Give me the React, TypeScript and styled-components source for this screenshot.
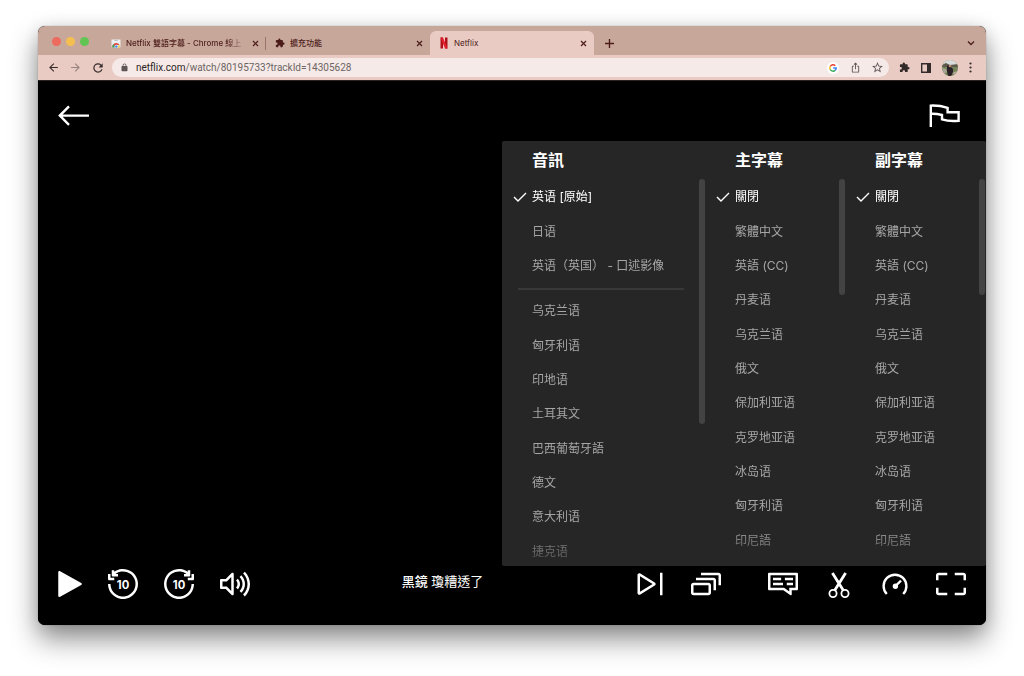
import React from 'react';
import styled, { createGlobalStyle, css } from 'styled-components';

const Global = createGlobalStyle`
  * { box-sizing: border-box; }
  body { margin: 0; background: #fff; font-family: Inter, 'Noto Sans CJK TC', sans-serif; }
  button { font: inherit; color: inherit; background: none; border: 0; padding: 0; cursor: pointer; }
  ul { list-style: none; margin: 0; padding: 0; }
  svg { display: block; }
`;

const Desktop = styled.div`
  padding: 26px 38px 51px;
  overflow: hidden;
`;
const BrowserWindow = styled.div`
  display: flex;
  flex-direction: column;
  border-radius: 7px;
  overflow: hidden;
  background: #000;
  box-shadow: 0 0 1px rgba(0, 0, 0, 0.5), 0 14px 28px rgba(0, 0, 0, 0.45), 0 2px 16px rgba(0, 0, 0, 0.1);
`;

const TabStrip = styled.div`
  display: flex;
  align-items: flex-end;
  height: 29px;
  background: #c8a79b;
  color: #4c1c1a;
`;
const Lights = styled.div`
  display: flex;
  gap: 5px;
  width: 64px;
  padding: 0 0 9px 14px;
`;
const Light = styled.button<{ $color: string }>`
  width: 9px;
  height: 9px;
  border-radius: 50%;
  background: ${p => p.$color};
`;
const Tab = styled.div<{ $active?: boolean; $divider?: boolean }>`
  display: flex;
  align-items: center;
  gap: 5px;
  width: 164px;
  height: 24px;
  padding: 0 5px 0 9px;
  font-size: 8px;
  font-weight: 500;
  line-height: 12px;
  ${p => p.$active && css`
    background: #eacbc3;
    border-radius: 6px 6px 0 0;
    font-weight: 400;
  `}
  ${p => p.$divider && css`
    background: linear-gradient(#9a7469, #9a7469) right center / 1px 13px no-repeat;
  `}
`;
const TabTitle = styled.span<{ $fade?: boolean }>`
  flex: 1;
  min-width: 0;
  white-space: nowrap;
  ${p => p.$fade && css`
    mask-image: linear-gradient(to right, #000 calc(100% - 18px), rgba(0, 0, 0, 0.1));
  `}
`;
const StripButton = styled.button`
  display: grid;
  place-items: center;
  width: 30px;
  height: 24px;
`;
const StripSpacer = styled.div`
  flex: 1;
`;

const Toolbar = styled.div`
  display: flex;
  align-items: center;
  gap: 10px;
  height: 25px;
  padding: 0 10px 0 9px;
  background: #eacbc3;
  color: #332b2a;
`;
const ToolButton = styled.button<{ $faded?: boolean }>`
  display: grid;
  place-items: center;
  flex: none;
  width: 12px;
  height: 16px;
  opacity: ${p => (p.$faded ? 0.45 : 1)};
`;
const AddressBar = styled.div`
  display: flex;
  align-items: center;
  gap: 10px;
  flex: 1;
  min-width: 0;
  height: 19px;
  margin: 0 -1px;
  padding: 0 6px 0 8px;
  border-radius: 10px;
  background: #f6eae8;
  color: #5d5654;
`;
const Url = styled.a`
  flex: 1;
  min-width: 0;
  margin-left: -3px;
  overflow: hidden;
  white-space: nowrap;
  font-family: Roboto, sans-serif;
  font-size: 10px;
  line-height: 14px;
  color: #6c6563;
  text-decoration: none;
`;
const Host = styled.span`
  color: #2a2423;
`;

const Player = styled.main`
  display: flex;
  flex-direction: column;
  border-top: 1px solid #2b2321;
  background: #000;
  color: #fff;
`;
const PlayerTop = styled.div`
  display: flex;
  justify-content: space-between;
  padding: 19px 26px 9px 20px;
`;
const IconButton = styled.button`
  display: grid;
  place-items: center;
  flex: none;
  width: 32px;
  height: 32px;
`;
const Panel = styled.section`
  display: flex;
  align-self: flex-end;
  width: 484px;
  max-width: 100%;
  height: 425px;
  border-radius: 2px;
  overflow: hidden;
  background: #262626;
`;
const Column = styled.fieldset<{ $wide?: boolean }>`
  flex: 0 1 ${p => (p.$wide ? '203px' : '140px')};
  min-width: 0;
  margin: 0;
  padding: 0;
  border: 0;
`;
const Heading = styled.legend`
  height: 38px;
  padding: 0 0 0 30px;
  font-size: 16px;
  font-weight: 600;
  line-height: 38px;
`;
const Scroller = styled.div`
  display: flex;
  align-items: flex-start;
  height: 387px;
  overflow: hidden;
`;
const Options = styled.ul<{ $divided?: boolean }>`
  flex: 1;
  display: grid;
  grid-template-rows: ${p => (p.$divided ? 'repeat(3, 1fr) 11px repeat(8, 1fr)' : 'repeat(11, 1fr)')};
  height: ${p => (p.$divided ? '389px' : '378px')};
  margin-top: 1px;
  mask-image: linear-gradient(to bottom, #000 345px, rgba(0, 0, 0, 0.25) 385px);
`;
const Thumb = styled.div<{ $length: number }>`
  flex: none;
  width: 6px;
  height: ${p => p.$length}px;
  border-radius: 3px;
  background: #434343;
`;
const Option = styled.label`
  display: flex;
  align-items: center;
  height: 100%;
  padding-left: 11px;
  font-size: 12px;
  line-height: 18px;
  white-space: nowrap;
  color: #a6a6a6;
  cursor: pointer;
  &:has(input:checked) { color: #fff; }
`;
const Radio = styled.input`
  appearance: none;
  width: 0;
  height: 0;
  margin: 0;
  & + svg { visibility: hidden; margin-right: 5px; }
  &:checked + svg { visibility: visible; }
`;
const Divider = styled.li`
  align-self: center;
  height: 2px;
  margin: 0 15px 0 16px;
  background: #383838;
`;

const Controls = styled.div`
  display: flex;
  align-items: center;
  height: 59px;
  padding: 0 19px 24px 13px;
`;
const ControlGroup = styled.div`
  display: flex;
  gap: 24px;
`;
const RightControls = styled(ControlGroup)`
  gap: 45px;
`;
const Title = styled.p`
  flex: 1;
  margin: 0;
  padding-bottom: 6px;
  text-align: center;
  font-size: 13px;
  line-height: 20px;
`;
const Show = styled.span`
  font-weight: 500;
`;

const Glyph = ({ d, size = 30 }: { d: string; size?: number }) => (
  <svg width={size} height={size} viewBox="0 0 24 24" fill="currentColor">
    <path fillRule="evenodd" d={d} />
  </svg>
);

const SKIP =
  'M11.02 2.048C13.322 1.821 15.632 2.4 17.556 3.685C19.479 4.971 20.898 6.883 21.569 9.097C22.241 11.311 22.124 13.689 21.239 15.827C20.353 17.964 18.754 19.729 16.714 20.819C14.674 21.91 12.318 22.259 10.049 21.808C7.78 21.357 5.738 20.132 4.27 18.344C2.802 16.556 2 14.314 2 12H0C0 14.776 0.963 17.467 2.724 19.613C4.485 21.759 6.936 23.228 9.659 23.769C12.382 24.311 15.208 23.892 17.657 22.583C20.105 21.274 22.024 19.157 23.087 16.592C24.149 14.027 24.289 11.173 23.483 8.517C22.677 5.86 20.975 3.565 18.667 2.022C16.359 0.48 13.587 -0.214 10.824 0.058C8.712 0.266 6.705 1.029 5 2.253V1H3V5C3 5.552 3.448 6 4 6H8V4H6C7.456 2.908 9.191 2.228 11.02 2.048ZM2 4V7H5V9H1C0.448 9 0 8.552 0 8V4H2Z';

const SkipIcon = ({ forward }: { forward?: boolean }) => (
  <svg width="30" height="30" viewBox="0 0 24 24" fill="currentColor">
    <path d={SKIP} transform={forward ? 'matrix(-1 0 0 1 24 0)' : undefined} />
    <text x="12" y="15.6" textAnchor="middle" fontSize="9" fontWeight="700" fontFamily="Inter, sans-serif">10</text>
  </svg>
);

const GLYPHS = {
  play: 'M5 2.691C5 1.931 5.815 1.449 6.482 1.815L23.407 11.124C24.098 11.504 24.098 12.496 23.407 12.876L6.482 22.185C5.815 22.551 5 22.069 5 21.309V2.691Z',
  volume:
    'M24 12C24 8.287 22.525 4.726 19.9 2.1L18.485 3.515C20.736 5.765 22 8.817 22 12C22 15.183 20.736 18.235 18.485 20.485L19.9 21.9C22.525 19.274 24 15.713 24 12ZM11 4C11 3.596 10.756 3.231 10.383 3.076C10.009 2.921 9.579 3.007 9.293 3.293L4.586 8H1C0.448 8 0 8.448 0 9V15C0 15.552 0.448 16 1 16H4.586L9.293 20.707C9.579 20.993 10.009 21.079 10.383 20.924C10.756 20.769 11 20.405 11 20V4ZM5.707 9.707L9 6.414V17.586L5.707 14.293L5.414 14H2V10H5.414L5.707 9.707ZM16 12C16 10.409 15.368 8.883 14.243 7.757L12.829 9.172C13.579 9.922 14 10.939 14 12C14 13.061 13.579 14.078 12.829 14.828L14.243 16.243C15.368 15.117 16 13.591 16 12ZM17.071 4.929C18.946 6.804 20 9.348 20 12C20 14.652 18.946 17.196 17.071 19.071L15.657 17.657C17.157 16.157 18 14.122 18 12C18 9.878 17.157 7.844 15.657 6.343L17.071 4.929Z',
  next: 'M22 3H20V21H22V3ZM4.286 3.617C3.287 3.002 2 3.721 2 4.895V19.105C2 20.279 3.287 20.998 4.286 20.383L15.832 13.278C16.784 12.692 16.784 11.308 15.832 10.723L4.286 3.617ZM4 18.21V5.79L14.092 12L4 18.21Z',
  episodes:
    'M8 5H22V13H24V5C24 3.895 23.105 3 22 3H8V5ZM18 9H4V7H18C19.105 7 20 7.895 20 9V17H18V9ZM0 13C0 11.895 0.895 11 2 11H14C15.105 11 16 11.895 16 13V19C16 20.105 15.105 21 14 21H2C0.895 21 0 20.105 0 19V13ZM14 19V13H2V19H14Z',
  subtitles:
    'M1 3C0.448 3 0 3.448 0 4V16C0 16.552 0.448 17 1 17H12.3L18 20.9C18.4 21.1 19 20.8 19 20.2V17H23C23.552 17 24 16.552 24 16V4C24 3.448 23.552 3 23 3H1ZM17 18V15H22V5H2V15H12.9L17 18ZM4 7H10.5V9H4ZM13.5 7H20V9H13.5ZM4 11H12V13H4ZM15 11H20V13H15Z',
  fullscreen:
    'M0 5C0 3.895 0.895 3 2 3H9V5H2V9H0V5ZM22 5H15V3H22C23.105 3 24 3.895 24 5V9H22V5ZM2 15V19H9V21H2C0.895 21 0 20.105 0 19V15H2ZM22 19V15H24V19C24 20.105 23.105 21 22 21H15V19H22Z',
  puzzle:
    'M20.5 11H19V7c0-1.1-.9-2-2-2h-4V3.5a2.5 2.5 0 0 0-5 0V5H4c-1.1 0-2 .9-2 2v3.8h1.5c1.5 0 2.7 1.2 2.7 2.7S5 16.2 3.5 16.2H2V20c0 1.1.9 2 2 2h3.800v-1.5c0-1.5 1.2-2.7 2.7-2.7s2.7 1.2 2.7 2.7V22H17c1.1 0 2-.9 2-2v-4h1.5a2.5 2.5 0 0 0 0-5z',
  lock: 'M18 8h-1V6A5 5 0 0 0 7 6v2H6a2 2 0 0 0-2 2v10a2 2 0 0 0 2 2h12a2 2 0 0 0 2-2V10a2 2 0 0 0-2-2zM9 6a3 3 0 0 1 6 0v2H9z',
  back: 'M20 11H7.8l5.6-5.6L12 4l-8 8 8 8 1.4-1.4L7.8 13H20z',
  reload:
    'M17.65 6.35A8 8 0 1 0 19.73 14h-2.08A6 6 0 1 1 12 6c1.66 0 3.14.69 4.22 1.78L13 11h7V4z',
  star: 'M22 9.24l-7.19-.62L12 2 9.19 8.63 2 9.24l5.46 4.73L5.82 21 12 17.27 18.18 21l-1.63-7.03zM12 15.4l-3.76 2.27 1-4.28-3.32-2.88 4.38-.38L12 6.1l1.71 4.04 4.38.38-3.32 2.88 1 4.28z',
  share: 'M16 5l-1.4 1.4-1.6-1.6V16h-2V4.8L9.4 6.4 8 5l4-4zM20 10v11a2 2 0 0 1-2 2H6a2 2 0 0 1-2-2V10c0-1.1.9-2 2-2h3v2H6v11h12V10h-3V8h3a2 2 0 0 1 2 2z',
};

const Cross = () => (
  <svg width="7" height="7" viewBox="0 0 7 7" stroke="currentColor" strokeWidth="1.2" fill="none">
    <path d="M1 1L6 6M6 1L1 6" />
  </svg>
);

const StoreIcon = () => (
  <svg width="10" height="10" viewBox="0 0 20 20">
    <path d="M1 3H19V17Q19 19 17 19H3Q1 19 1 17Z" fill="#eceff1" />
    <path d="M7 5H13" stroke="#b8bec2" strokeWidth="2" />
    <path d="M3 19A7.5 7.5 0 0 1 17 14L10 14Z" fill="#e0453a" />
    <path d="M3 19Q2 15 4.5 12L8.5 19Z" fill="#2fa653" />
    <path d="M17 14Q18.5 17 17 19H10Z" fill="#f8c933" />
    <circle cx="10.5" cy="17" r="3" fill="#4285f4" stroke="#fff" />
  </svg>
);

const NetflixIcon = () => (
  <svg width="10" height="12" viewBox="0 0 10 12">
    <path d="M1.5 0.5H4V11.5H1.5Z M6 0.5H8.500V11.5H6Z" fill="#b1101a" />
    <path d="M1.5 0.5H4L8.5 11.5H6Z" fill="#e4202b" />
  </svg>
);

const GoogleIcon = () => (
  <svg width="12" height="12" viewBox="0 0 12 12" fill="none" strokeWidth="1.5">
    <circle cx="6" cy="6" r="6" fill="#fff" />
    <path d="M8.3 3.7A3.2 3.2 0 0 0 3.2 4.5" stroke="#ea4335" />
    <path d="M3.2 4.5A3.2 3.2 0 0 0 3.2 7.5" stroke="#fbbc05" />
    <path d="M3.2 7.5A3.2 3.2 0 0 0 8.1 8.4" stroke="#34a853" />
    <path d="M8.1 8.4A3.2 3.2 0 0 0 9.2 6H6.2" stroke="#4285f4" />
  </svg>
);

const Avatar = () => (
  <svg width="16" height="16" viewBox="0 0 16 16">
    <clipPath id="avatar"><circle cx="8" cy="8" r="8" /></clipPath>
    <g clipPath="url(#avatar)">
      <rect width="16" height="16" fill="#75835a" />
      <rect width="16" height="5" fill="#d9dcdc" />
      <path d="M0 5L4 3L8 5L16 4V7H0Z" fill="#5d5a4c" />
      <path d="M5 6L7 5L9 7L11 9V13L9 16H6L5 11Z" fill="#2b2027" />
      <path d="M0 8L4 9L5 12L2 14Z" fill="#a9a594" />
      <path d="M10 13L15 11L13 15Z" fill="#b3ab9a" />
      <circle cx="8" cy="6" r="1.3" fill="#b98b78" />
    </g>
  </svg>
);

const Check = () => (
  <svg width="14" height="12" viewBox="0 0 14 12" stroke="currentColor" strokeWidth="1.4" fill="none">
    <path d="M1 6L5 10L13 2" />
  </svg>
);

const AUDIO = ['英语 [原始]', '日语', '英语（英国） - 口述影像', '乌克兰语', '匈牙利语', '印地语', '土耳其文', '巴西葡萄牙語', '德文', '意大利语', '捷克语'];
const SUBTITLES = ['關閉', '繁體中文', '英語 (CC)', '丹麦语', '乌克兰语', '俄文', '保加利亚语', '克罗地亚语', '冰岛语', '匈牙利语', '印尼語'];

type TrackColumnProps = { name: string; title: string; items: string[]; thumb: number; dividerAfter?: number };

const TrackColumn = ({ name, title, items, thumb, dividerAfter }: TrackColumnProps) => (
  <Column $wide={dividerAfter !== undefined}>
    <Heading>{title}</Heading>
    <Scroller>
      <Options $divided={dividerAfter !== undefined}>
        {items.map((item, i) => (
          <React.Fragment key={item}>
            <li>
              <Option>
                <Radio type="radio" name={name} defaultChecked={i === 0} />
                <Check />
                {item}
              </Option>
            </li>
            {i === dividerAfter && <Divider aria-hidden="true" />}
          </React.Fragment>
        ))}
      </Options>
      <Thumb $length={thumb} />
    </Scroller>
  </Column>
);

export default function App() {
  return (
    <>
      <Global />
      <Desktop>
        <BrowserWindow>
          <TabStrip>
            <Lights>
              <Light $color="#ed6a5e" aria-label="Close window" />
              <Light $color="#f5bf4f" aria-label="Minimize window" />
              <Light $color="#61c554" aria-label="Zoom window" />
            </Lights>
            <Tab $divider>
              <StoreIcon />
              <TabTitle $fade>Netflix 雙語字幕 - Chrome 線上</TabTitle>
              <ToolButton aria-label="Close tab"><Cross /></ToolButton>
            </Tab>
            <Tab>
              <Glyph d={GLYPHS.puzzle} size={10} />
              <TabTitle>擴充功能</TabTitle>
              <ToolButton aria-label="Close tab"><Cross /></ToolButton>
            </Tab>
            <Tab $active>
              <NetflixIcon />
              <TabTitle>Netflix</TabTitle>
              <ToolButton aria-label="Close tab"><Cross /></ToolButton>
            </Tab>
            <StripButton aria-label="New tab">
              <svg width="9" height="9" viewBox="0 0 9 9" stroke="currentColor" strokeWidth="1.4"><path d="M4.5 0V9M0 4.5H9" /></svg>
            </StripButton>
            <StripSpacer />
            <StripButton aria-label="Search tabs">
              <svg width="8" height="6" viewBox="0 0 8 6" stroke="currentColor" strokeWidth="1.3" fill="none"><path d="M1 1.5L4 4.5L7 1.5" /></svg>
            </StripButton>
          </TabStrip>

          <Toolbar>
            <ToolButton aria-label="Back"><Glyph d={GLYPHS.back} size={13} /></ToolButton>
            <ToolButton aria-label="Forward" $faded>
              <svg width="13" height="13" viewBox="0 0 24 24" fill="currentColor"><path d={GLYPHS.back} transform="matrix(-1 0 0 1 24 0)" /></svg>
            </ToolButton>
            <ToolButton aria-label="Reload"><Glyph d={GLYPHS.reload} size={14} /></ToolButton>
            <AddressBar>
              <Glyph d={GLYPHS.lock} size={9} />
              <Url href="#watch"><Host>netflix.com</Host>/watch/80195733?trackId=14305628</Url>
              <ToolButton aria-label="Google"><GoogleIcon /></ToolButton>
              <ToolButton aria-label="Share"><Glyph d={GLYPHS.share} size={11} /></ToolButton>
              <ToolButton aria-label="Bookmark"><Glyph d={GLYPHS.star} size={13} /></ToolButton>
            </AddressBar>
            <ToolButton aria-label="Extensions"><Glyph d={GLYPHS.puzzle} size={11} /></ToolButton>
            <ToolButton aria-label="Side panel">
              <svg width="10" height="10" viewBox="0 0 10 10"><path fillRule="evenodd" fill="currentColor" d="M0 0H10V10H0ZM1.4 1.4V8.600H6V1.4Z" /></svg>
            </ToolButton>
            <ToolButton aria-label="Profile"><Avatar /></ToolButton>
            <ToolButton aria-label="Menu">
              <svg width="3" height="11" viewBox="0 0 3 11" fill="currentColor"><circle cx="1.5" cy="1.5" r="1.1" /><circle cx="1.5" cy="5.5" r="1.1" /><circle cx="1.5" cy="9.5" r="1.1" /></svg>
            </ToolButton>
          </Toolbar>

          <Player>
            <PlayerTop>
              <IconButton aria-label="Back to browse">
                <svg width="32" height="32" viewBox="0 0 32 32" stroke="currentColor" strokeWidth="2.4" fill="none"><path d="M2 15.6H31M11 6.4L1.8 15.6L11 24.8" /></svg>
              </IconButton>
              <IconButton aria-label="Report a problem">
                <svg width="32" height="32" viewBox="0 0 32 32" stroke="currentColor" strokeWidth="2.4" fill="none"><path d="M2.8 27V5.6C9 5.4 14 6 19.600 7.8V12.200H30.600V20.800C24 21.400 19 21 14 19.4V15C10 14 7 13.6 2.8 13.8" /></svg>
              </IconButton>
            </PlayerTop>

            <Panel aria-label="Audio and subtitles">
              <TrackColumn name="audio" title="音訊" items={AUDIO} thumb={245} dividerAfter={2} />
              <TrackColumn name="primary" title="主字幕" items={SUBTITLES} thumb={116} />
              <TrackColumn name="secondary" title="副字幕" items={SUBTITLES} thumb={116} />
            </Panel>

            <Controls>
              <ControlGroup>
                <IconButton aria-label="Play"><Glyph d={GLYPHS.play} /></IconButton>
                <IconButton aria-label="Back 10 seconds"><SkipIcon /></IconButton>
                <IconButton aria-label="Forward 10 seconds"><SkipIcon forward /></IconButton>
                <IconButton aria-label="Volume"><Glyph d={GLYPHS.volume} /></IconButton>
              </ControlGroup>
              <Title><Show>黑鏡</Show> 瓊糟透了</Title>
              <RightControls>
                <ControlGroup>
                  <IconButton aria-label="Next episode"><Glyph d={GLYPHS.next} /></IconButton>
                  <IconButton aria-label="Episodes"><Glyph d={GLYPHS.episodes} /></IconButton>
                </ControlGroup>
                <ControlGroup>
                  <IconButton aria-label="Subtitles"><Glyph d={GLYPHS.subtitles} /></IconButton>
                  <IconButton aria-label="Clip">
                    <svg width="32" height="32" viewBox="0 0 32 32" fill="none" stroke="currentColor">
                      <path d="M9.4 5L20.4 22.600M22.600 5L11.600 22.600" strokeWidth="2.8" />
                      <circle cx="10" cy="25.5" r="3.6" strokeWidth="1.8" />
                      <circle cx="22" cy="25.5" r="3.6" strokeWidth="1.8" />
                    </svg>
                  </IconButton>
                  <IconButton aria-label="Playback speed">
                    <svg width="32" height="32" viewBox="0 0 32 32" fill="none" stroke="currentColor" strokeWidth="2.4">
                      <path d="M7.8 26A11.4 11.4 0 1 1 24.2 26" />
                      <path d="M16 18.5L22 12.6" />
                      <circle cx="16.4" cy="18.2" r="1.5" fill="currentColor" />
                    </svg>
                  </IconButton>
                  <IconButton aria-label="Fullscreen"><Glyph d={GLYPHS.fullscreen} /></IconButton>
                </ControlGroup>
              </RightControls>
            </Controls>
          </Player>
        </BrowserWindow>
      </Desktop>
    </>
  );
}
